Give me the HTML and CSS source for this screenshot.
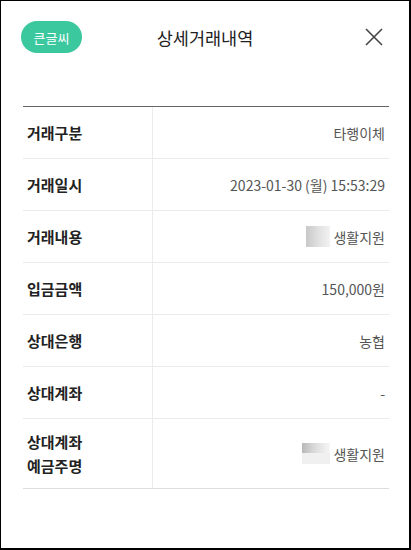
FILE: index.html
```html
<!DOCTYPE html>
<html>
<head>
	<title>상세거래내역</title>
	<link rel="stylesheet" href="styles.css">
</head>
<body>
	<div class="frame">
		<div class="header">
			<span class="badge">큰글씨</span>
			<h1 class="title">상세거래내역</h1>
			<span class="close">
				<svg width="18" height="18" viewBox="0 0 18 18"><path d="M1 1L17 17M17 1L1 17" stroke="#444" stroke-width="1.6" fill="none"/></svg>
			</span>
		</div>

		<div class="detail">
			<div class="row">
				<div class="label">거래구분</div>
				<div class="value">타행이체</div>
			</div>
			<div class="row">
				<div class="label">거래일시</div>
				<div class="value">2023-01-30 (월) 15:53:29</div>
			</div>
			<div class="row">
				<div class="label">거래내용</div>
				<div class="value"><i class="mask"></i>생활지원</div>
			</div>
			<div class="row">
				<div class="label">입금금액</div>
				<div class="value">150,000원</div>
			</div>
			<div class="row">
				<div class="label">상대은행</div>
				<div class="value">농협</div>
			</div>
			<div class="row">
				<div class="label">상대계좌</div>
				<div class="value">-</div>
			</div>
			<div class="row tall">
				<div class="label">상대계좌<br>예금주명</div>
				<div class="value"><i class="mask mask2"></i>생활지원</div>
			</div>
		</div>
	</div>
</body>
</html>
```

FILE: styles.css
```css
body{
	margin: 0;
	font-family: "Noto Sans CJK KR", "Noto Sans", sans-serif;
}
.frame{
	box-sizing: border-box;
	width: 411px;
	height: 550px;
	border-style: solid;
	border-color: #000;
	border-width: 1px 2px 2px 1px;
	background-color: #fff;
}
/* 제목은 가운데, 양쪽은 버튼 */
.header{
	display: grid;
	grid-template-columns: 1fr auto 1fr;
	align-items: center;
	height: 32px;
	margin-top: 20px;
	padding: 0 26px 0 20px;
}
.badge{
	display: flex;
	align-items: center;
	justify-content: center;
	width: 61px;
	height: 32px;
	border-radius: 16px;
	background-color: #3cc89f;
	color: #fff;
	font-size: 13px;
}
.title{
	margin: 0 0 0 6px;
	font-size: 17.5px;
	font-weight: 400;
	color: #222;
}
.close{
	display: flex;
	justify-self: end;
	width: 18px;
	height: 18px;
}
.detail{
	margin: 53px 20px 0 22px;
	border-top: 1px solid #666;
}
.row{
	display: grid;
	grid-template-columns: 130px 1fr;
	height: 52px;
	box-sizing: border-box;
	border-bottom: 1px solid #ebebeb;
}
.row.tall{
	height: 70px;
	border-bottom-color: #ddd;
}
.label{
	display: flex;
	align-items: center;
	padding-left: 4px;
	border-right: 1px solid #ebebeb;
	font-size: 15px;
	font-weight: 700;
	color: #222;
	line-height: 24px;
}
.value{
	display: flex;
	align-items: center;
	justify-content: flex-end;
	padding-right: 4px;
	font-size: 14px;
	color: #555;
}
.mask{
	display: inline-block;
	width: 24px;
	height: 21px;
	margin-right: 3px;
	background: linear-gradient(90deg, #c8c8c8, #e0e0e0 50%, #f2f2f2);
}
.mask2{
	width: 28px;
	background: linear-gradient(180deg, rgba(255,255,255,0) 50%, #f0f0f0 50%), linear-gradient(90deg, #b8b8b8, #d8d8d8 40%, #e8e8e8 70%, #f6f6f6);
}
```
